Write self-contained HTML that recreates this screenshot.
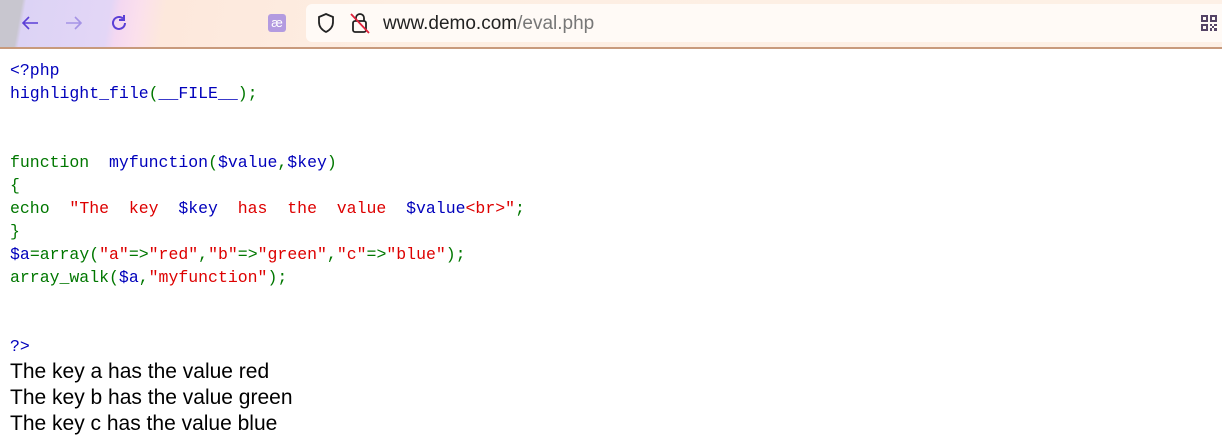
<!DOCTYPE html>
<html><head><meta charset="utf-8"><style>
body{margin:0;width:1222px;height:438px;overflow:hidden;background:#fff;font-family:"Liberation Sans",sans-serif}
.bar{position:absolute;left:0;top:0;width:1222px;height:47px;background:linear-gradient(100deg,#c8c6cf 0,#c8c6cf 22px,#dcd3f5 26px,#e3d6f6 110px,#f4d8f1 120px,#fbe0ec 140px,#fde8dc 165px,#fdeee2 400px,#fdf0e6 100%);border-bottom:2px solid #c89a7c}
.url{position:absolute;left:306px;top:4px;width:916px;height:38px;background:#fffaf6;border-radius:6px 0 0 6px}
.code{position:absolute;left:10px;top:59px;font-family:"Liberation Mono",monospace;font-size:16.5px;line-height:23px;white-space:pre;color:#0000BB}
.g{color:#007700}.r{color:#DD0000}.b{color:#0000BB}
.out{position:absolute;left:10px;top:359px;font-size:21px;line-height:26px;color:#000}
</style></head><body>
<div class="bar">
<svg style="position:absolute;left:20px;top:13px" width="20" height="20" viewBox="0 0 20 20"><path d="M18 10H3M9 4L3 10l6 6" fill="none" stroke="#5b3fd6" stroke-width="1.6"/></svg>
<svg style="position:absolute;left:64px;top:13px" width="20" height="20" viewBox="0 0 20 20"><path d="M2 10h15M11 4l6 6-6 6" fill="none" stroke="#a593e6" stroke-width="1.6"/></svg>
<svg style="position:absolute;left:108px;top:12px" width="22" height="22" viewBox="0 0 22 22"><path d="M17 11a6 6 0 1 1-2-4.5" fill="none" stroke="#5b3fd6" stroke-width="2"/><path d="M16 3v5h-5" fill="none" stroke="#5b3fd6" stroke-width="2"/></svg>
<div style="position:absolute;left:268px;top:14px;width:18px;height:18px;background:#b39be0;border-radius:3px;color:#fff;font-size:13px;text-align:center;line-height:18px">æ</div>
<div class="url"></div>
<svg style="position:absolute;left:315px;top:12px" width="22" height="22" viewBox="0 0 22 22"><path d="M11 2l7 3v5c0 5-3 8-7 10-4-2-7-5-7-10V5z" fill="none" stroke="#222" stroke-width="1.8"/></svg>
<svg style="position:absolute;left:349px;top:11px" width="22" height="24" viewBox="0 0 22 24"><rect x="4" y="10" width="13" height="11" rx="2" fill="none" stroke="#222" stroke-width="1.8"/><path d="M7 10V7a4 4 0 0 1 8 0v3" fill="none" stroke="#222" stroke-width="1.8"/><path d="M2 3l18 19" stroke="#e0203a" stroke-width="1.8"/></svg>
<div style="position:absolute;left:383px;top:13px;font-size:19px;color:#222">www.demo.com<span style="color:#777">/eval.php</span></div>
<svg style="position:absolute;left:1200px;top:14px" width="18" height="18" viewBox="0 0 18 18" fill="#554466"><path d="M1 1h7v7H1zM3 3v3h3V3zM10 1h7v7h-7zM12 3v3h3V3zM1 10h7v7H1zM3 12v3h3v-3zM10 10h2v2h-2zM14 10h3v2h-3zM12 12h2v2h-2zM10 14h2v3h-2zM14 14h3v3h-3z"/></svg>
</div>
<div class="code">&lt;?php
highlight_file<span class="g">(</span>__FILE__<span class="g">);</span>


<span class="g">function  </span>myfunction<span class="g">(</span>$value<span class="g">,</span>$key<span class="g">)</span>
<span class="g">{</span>
<span class="g">echo  </span><span class="r">"The  key  </span>$key<span class="r">  has  the  value  </span>$value<span class="r">&lt;br&gt;"</span><span class="g">;</span>
<span class="g">}</span>
$a<span class="g">=array(</span><span class="r">"a"</span><span class="g">=&gt;</span><span class="r">"red"</span><span class="g">,</span><span class="r">"b"</span><span class="g">=&gt;</span><span class="r">"green"</span><span class="g">,</span><span class="r">"c"</span><span class="g">=&gt;</span><span class="r">"blue"</span><span class="g">);</span>
<span class="g">array_walk(</span>$a<span class="g">,</span><span class="r">"myfunction"</span><span class="g">);</span>


?&gt;</div>
<div class="out">The key a has the value red<br>The key b has the value green<br>The key c has the value blue</div>
</body></html>
